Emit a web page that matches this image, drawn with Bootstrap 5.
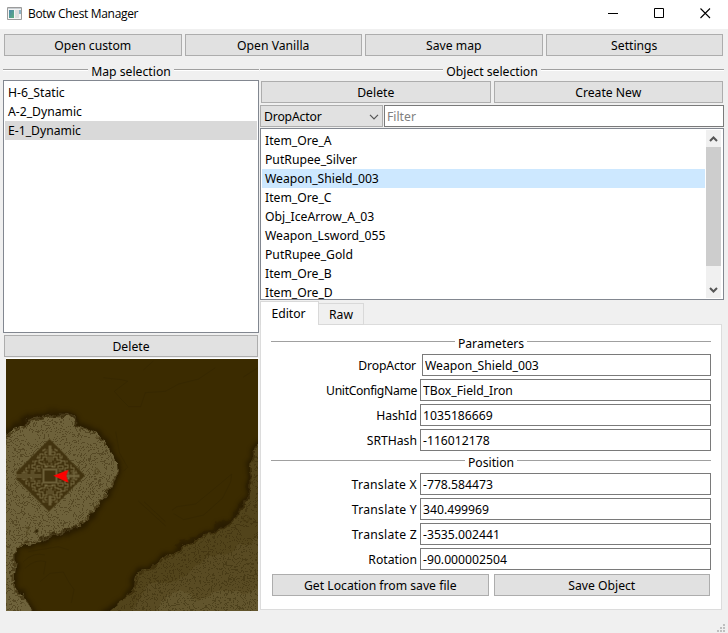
<!DOCTYPE html>
<html lang="en">
<head>
<meta charset="utf-8">
<title>Botw Chest Manager</title>
<meta name="viewport" content="width=device-width, initial-scale=1">
<link href="https://cdn.jsdelivr.net/npm/bootstrap@5.3.0/dist/css/bootstrap.min.css" rel="stylesheet">
<style>
body{width:728px;height:633px;overflow:hidden;background:#f0f0f0;color:#000;font:12.2px/19px "Noto Sans",sans-serif}
svg{display:block}
.titlebar{height:29px;padding:0 17px 2px 7px;font:12px/27px "Open Sans","Noto Sans",sans-serif}
.titlebar .caption{margin-left:6px;letter-spacing:-.33px}
.win-btns{gap:35px}
.toolbar{padding:5px 5px 0 4px;gap:3px}
.btn.wbtn{height:22px;padding:1px 0 0;border:1px solid #adadad;border-radius:0;background:#e1e1e1;color:#000;font-size:inherit;line-height:20px;flex:1 1 0;min-width:0}
.rule{height:19px;line-height:19px}
.rule::before,.rule::after{content:"";flex:1;height:2px;background:#a0a0a0;border-bottom:1px solid #fff;margin-top:-4px}
.rule span{padding:0 3px}
main .rule{position:relative;top:2px}
.left{width:256px;margin-left:3px}
.right{width:464px;margin-left:1px}
.listbox{background:#fff;border:1px solid #828790;overflow:hidden;padding:2px 1px 0}
.listbox .list-group-item{border:0;padding:0 4px 0 3px;height:19px;line-height:19px;background:none;color:#000;white-space:nowrap;border-radius:0}
.maps{height:253px;margin-top:1px}.maps .list-group-item.picked{background:#d9d9d9}
.objects{height:172px;padding:1px 2px 0 1px}
.objects .list-group{padding-top:1px;width:443px}
.objects .list-group-item.picked{background:#cde8ff}
.sbar{width:15px;height:168px;background:#f0f0f0;margin-left:1px}
.sbar .thumb{height:119px;background:#cdcdcd}
.sbar svg{margin:0 auto}
.combo{width:123px;height:22px;border:1px solid #adadad;background:#e1e1e1;padding:1px 3px 0;line-height:20px}
.combo span{letter-spacing:-.15px}
.form-control.wfield{height:22px;min-height:0;padding:0 2px;border:1px solid #7a7a7a;border-radius:0;background:#fff;color:#000;font-size:inherit;line-height:20px}
.wfield::placeholder{color:#808080!important}
.tabs{height:24px;padding-top:1px}
.tab-on{width:59px;height:24px;background:#fff;border:1px solid #d9d9d9;border-bottom:0;line-height:23px;text-align:center;z-index:1;padding-right:2px}
.tab-off{width:45px;height:22px;margin-top:2px;border:1px solid #d9d9d9;border-left:0;line-height:21px;text-align:center}
.pane{width:462px;height:286px;border:1px solid #dcdcdc;background:#fff;padding:8px 10px 0}
.pane .rule{top:0;padding-top:1px}
.pane .rule::before,.pane .rule::after{height:1px;border:0;margin-top:-4px}
.pane .rule.pos{padding-top:0}
.fields{gap:3px}
.lbl{flex:none;width:146px;text-align:right;margin-right:3px;white-space:nowrap;padding-top:2px}
.lbl.narrow{width:145px;margin-right:6px;letter-spacing:-.15px}
.lbl.wide{letter-spacing:.25px}
.lbl.tight{letter-spacing:-.35px}
.map{margin:1px 0 0 3px;border-top:1px solid #fff}
</style>
<script src="https://cdn.jsdelivr.net/npm/bootstrap@5.3.0/dist/js/bootstrap.bundle.min.js"></script>
</head>
<body>
<header class="titlebar bg-white d-flex align-items-center">
<svg width="15" height="13" viewBox="0 0 15 13"><defs><linearGradient id="ic" x2="1" y2="1"><stop stop-color="#4b86ad"/><stop offset="1" stop-color="#5cae7c"/></linearGradient></defs><path fill="#f4f4f4" stroke="#9b9b9b" d="M.5.5h14v12H.5z"/><path fill="#c9ced2" d="M1 1h13v1H1z"/><path fill="url(#ic)" d="M2 3h5v8H2z"/><path fill="#dedede" d="M8 3h4v8H8z"/><path fill="#8fb6c7" d="M12 3h2v4h-2z"/></svg>
<span class="caption">Botw Chest Manager</span>
<div class="win-btns d-flex align-items-center ms-auto">
<svg width="11" height="11" stroke="#000"><path d="M0 5.5h10"/></svg>
<svg width="11" height="11" fill="none" stroke="#000"><path d="M.5.5h9v9h-9z"/></svg>
<svg width="11" height="11" stroke="#000" stroke-width="1.1"><path d="M.5.5l9.500 9.500M10 .5l-9.500 9.500"/></svg>
</div>
</header>

<nav class="toolbar d-flex">
<button class="btn wbtn">Open custom</button><button class="btn wbtn">Open Vanilla</button><button class="btn wbtn">Save map</button><button class="btn wbtn">Settings</button>
</nav>

<main class="d-flex pt-1">
<section class="left">
<div class="rule d-flex align-items-center"><span>Map selection</span></div>
<div class="listbox maps"><div class="list-group">
<div class="list-group-item">H-6_Static</div><div class="list-group-item">A-2_Dynamic</div><div class="list-group-item picked">E-1_Dynamic</div>
</div></div>
<div class="d-flex" style="padding:2px 1px 0"><button class="btn wbtn">Delete</button></div>
<div class="map">
<svg width="252" height="252" viewBox="18 12 756 756">
<defs>
<filter id="rough" color-interpolation-filters="sRGB" x="-5%" y="-5%" width="110%" height="110%"><feTurbulence type="fractalNoise" baseFrequency=".03" numOctaves="3" seed="4"/><feDisplacementMap in="SourceGraphic" scale="32" xChannelSelector="R" yChannelSelector="G"/></filter>
<filter id="soft" color-interpolation-filters="sRGB"><feTurbulence type="fractalNoise" baseFrequency=".03" numOctaves="3" seed="4"/><feDisplacementMap in="SourceGraphic" scale="32" xChannelSelector="R" yChannelSelector="G"/><feGaussianBlur stdDeviation="6"/></filter>
<filter id="contours" color-interpolation-filters="sRGB" x="0" y="0" width="100%" height="100%"><feTurbulence type="fractalNoise" baseFrequency=".018" numOctaves="4" seed="9"/><feColorMatrix values="0 0 0 0 .2  0 0 0 0 .15  0 0 0 0 .02  1 0 0 0 0"/><feComponentTransfer><feFuncA type="discrete" tableValues="0 0 0 0 0 0 0 0 0 0 0 0 0 0 0 .4 0 0 0 0 .4 0 0 0 0 .4 0 0 0 0 .4 0 0 0 0 .4 0 0 0 0 0 0 0 0 0 0 0 0 0 0"/></feComponentTransfer><feComposite in2="SourceGraphic" operator="in"/></filter>
<path id="isle" d="M-20 246L18 238 60 212 90 190 150 175 200 177 235 205 290 230 325 272 348 315 350 355 333 400 303 440 268 490 240 514 180 538 120 564 45 575 46 620 40 690 70 730 120 800H-20z"/>
<path id="coast" d="M800 260L774 270 755 300 750 400 740 430 700 490 640 530 560 570 500 600 450 640 405 660 400 700 370 735 290 800H800z"/>
<path id="quad" fill="none" stroke="#766a42" d="M2-9H5V-12H9M3-12H1M3-15V-19H7V-16H11V-13H8M2-21H5V-24H2M2-26H3M9-10H13V-7H9M9-5H12M12-15H15V-11H18V-8H15V-5H19M7-20V-22H10V-18H13M17-13V-15M21-11V-7M21-5H24V-8H22M15-3H19V-2M22-3H28M26-5V-3M5-27V-26H7V-24M12-20V-18M8-7V-10M6-14H5"/>
</defs>
<path fill="#3b2b00" d="M0 0h800v800H0z"/>
<g fill="none" stroke="#302300" stroke-width="2" opacity=".6"><path d="M310 68l25 3 30 3 18 5-40 30 20 23 23 23h36l14-42 60-4 40-22 60-15 50-34M430 45l30-27M730 66l44-28M415 438l82 75M432 440l64 60M347 230l12 65 24 42-12 11M517 465l14-10 56-8 75-62 33-28-3 24-24 48-57 51-60 14-30-18M70 620q30-30 65-20M75 640q32-30 62-20l-6 38M120 680l30-25 40-4 15 28 17 25-8 40M85 590l90-15 32 10"/></g>
<use href="#isle" fill="none" stroke="#201500" stroke-width="20" opacity=".65" filter="url(#soft)"/>
<use href="#coast" fill="none" stroke="#1d1300" stroke-width="20" opacity=".65" filter="url(#soft)"/>
<g filter="url(#rough)"><use href="#isle" fill="#6e623b"/><use href="#coast" fill="#52441b"/>
<path fill="#594b23" d="M800 540L690 590 610 610 560 655 500 690 440 690 380 800H800z"/><path fill="#62552d" d="M800 690L740 720 680 700 600 735 540 705 480 740 470 800H800z"/>
<path d="M20 242L62 218 92 196 150 180 200 182 235 210 290 236 322 278M347 355L330 398 300 438 265 488 238 510 180 532 118 558 50 570M42 575V620L36 690 66 730 110 780M772 275L757 302 754 400 744 432 702 494 642 534 562 574 502 604 450 644 410 664 404 702 370 740" fill="none" stroke="#332403" stroke-width="6" stroke-dasharray="17 5" opacity=".6"/>
<path d="M65 210L92 188 148 175 205 180 235 207M752 350L744 424 700 484 640 525 530 575M120 558L180 536 235 514" fill="none" stroke="#2b1d02" stroke-width="13" opacity=".5"/></g>
<g filter="url(#contours)"><use href="#isle" transform="translate(-8 0)"/><use href="#coast" transform="translate(8 8)"/></g>
<g transform="translate(148.500 361.500) scale(3)" shape-rendering="crispEdges">
<path fill="#42330f" d="M0-36.500L35.500 0 0 36-33.500 3V-3z"/>
<use href="#quad"/><use href="#quad" transform="scale(-1 1)"/><use href="#quad" transform="scale(1 -1)"/><use href="#quad" transform="scale(-1 -1)"/>
<path fill="none" stroke="#6d6039" stroke-width="3" d="M8 0H30M0-30V-20M0 20V30"/>
<path fill="none" stroke="#766a42" d="M-33-1H-8M-33 1H-8M-1-19V-13M1-19V-13M-1 13V19M1 13V19M24-4V4M18-4V4M-4-10H4M-4 10H4"/>
<path fill="#42330f" stroke="#6d6039" stroke-width="2" d="M-6.500-6.500H6.500V6.500H-6.500z"/>
</g>
<circle cx="110" cy="528" r="5" fill="#332606"/>
<path fill="none" stroke="#42350f" stroke-width="2" d="M728 486l12-6 9 8-5 12-13-2zM285 345l6-5 6 8-5 10-7-3zM75 517h15l-10 13 8 8"/>
<path fill="red" d="M160 362L205 344 199 362 205 383z"/>
</svg>
</div>
</section>

<section class="right">
<div class="rule d-flex align-items-center"><span>Object selection</span></div>
<div class="d-flex" style="gap:3px;padding:2px 1px 2px"><button class="btn wbtn">Delete</button><button class="btn wbtn">Create New</button></div>
<div class="d-flex" style="gap:1px;margin-bottom:1px">
<div class="combo d-flex align-items-center justify-content-between"><span>DropActor</span><svg width="10" height="6" fill="none" stroke="#555" stroke-width="1.2"><path d="M1 .8l4 4 4-4"/></svg></div>
<input class="form-control wfield flex-fill w-auto" placeholder="Filter" aria-label="Filter">
</div>
<div class="listbox objects d-flex">
<div class="list-group">
<div class="list-group-item">Item_Ore_A</div><div class="list-group-item">PutRupee_Silver</div><div class="list-group-item picked">Weapon_Shield_003</div><div class="list-group-item">Item_Ore_C</div><div class="list-group-item">Obj_IceArrow_A_03</div><div class="list-group-item">Weapon_Lsword_055</div><div class="list-group-item">PutRupee_Gold</div><div class="list-group-item">Item_Ore_B</div><div class="list-group-item">Item_Ore_D</div>
</div>
<div class="sbar"><svg width="9" height="17" fill="none" stroke="#555" stroke-width="2"><path d="M1 11l3.500-3.500 3.500 3.500"/></svg><div class="thumb"></div><svg width="9" height="32" fill="none" stroke="#555" stroke-width="2"><path d="M1 22l3.500 3.500 3.500-3.500"/></svg></div>
</div>
<div class="tabs d-flex"><div class="tab-on">Editor</div><div class="tab-off">Raw</div></div>
<div class="pane">
<div class="rule d-flex align-items-center"><span>Parameters</span></div>
<div class="fields d-flex flex-column" style="margin-top:2px">
<div class="d-flex"><label class="lbl narrow">DropActor</label><input class="form-control wfield" value="Weapon_Shield_003" aria-label="DropActor"></div>
<div class="d-flex"><label class="lbl tight">UnitConfigName</label><input class="form-control wfield" value="TBox_Field_Iron" aria-label="UnitConfigName"></div>
<div class="d-flex"><label class="lbl">HashId</label><input class="form-control wfield" value="1035186669" aria-label="HashId"></div>
<div class="d-flex"><label class="lbl">SRTHash</label><input class="form-control wfield" value="-116012178" aria-label="SRTHash"></div>
</div>
<div class="rule pos d-flex align-items-center" style="margin-top:2px"><span>Position</span></div>
<div class="fields d-flex flex-column" style="margin-top:1px">
<div class="d-flex"><label class="lbl wide">Translate X</label><input class="form-control wfield" value="-778.584473" aria-label="Translate X"></div>
<div class="d-flex"><label class="lbl wide">Translate Y</label><input class="form-control wfield" value="340.499969" aria-label="Translate Y"></div>
<div class="d-flex"><label class="lbl wide">Translate Z</label><input class="form-control wfield" value="-3535.002441" aria-label="Translate Z"></div>
<div class="d-flex"><label class="lbl">Rotation</label><input class="form-control wfield" value="-90.000002504" aria-label="Rotation"></div>
</div>
<div class="d-flex" style="gap:5px;padding:4px 1px 0"><button class="btn wbtn">Get Location from save file</button><button class="btn wbtn">Save Object</button></div>
</div>
</section>
</main>
<footer class="d-flex justify-content-end" style="padding:13px 3px 0 0"><svg width="8" height="9" fill="#bfbfbf"><path d="M6 0h2v2H6zM3 3h2v2H3zM6 3h2v2H6zM0 6h2v2H0zM3 6h2v2H3zM6 6h2v2H6z"/></svg></footer>
</body>
</html>
